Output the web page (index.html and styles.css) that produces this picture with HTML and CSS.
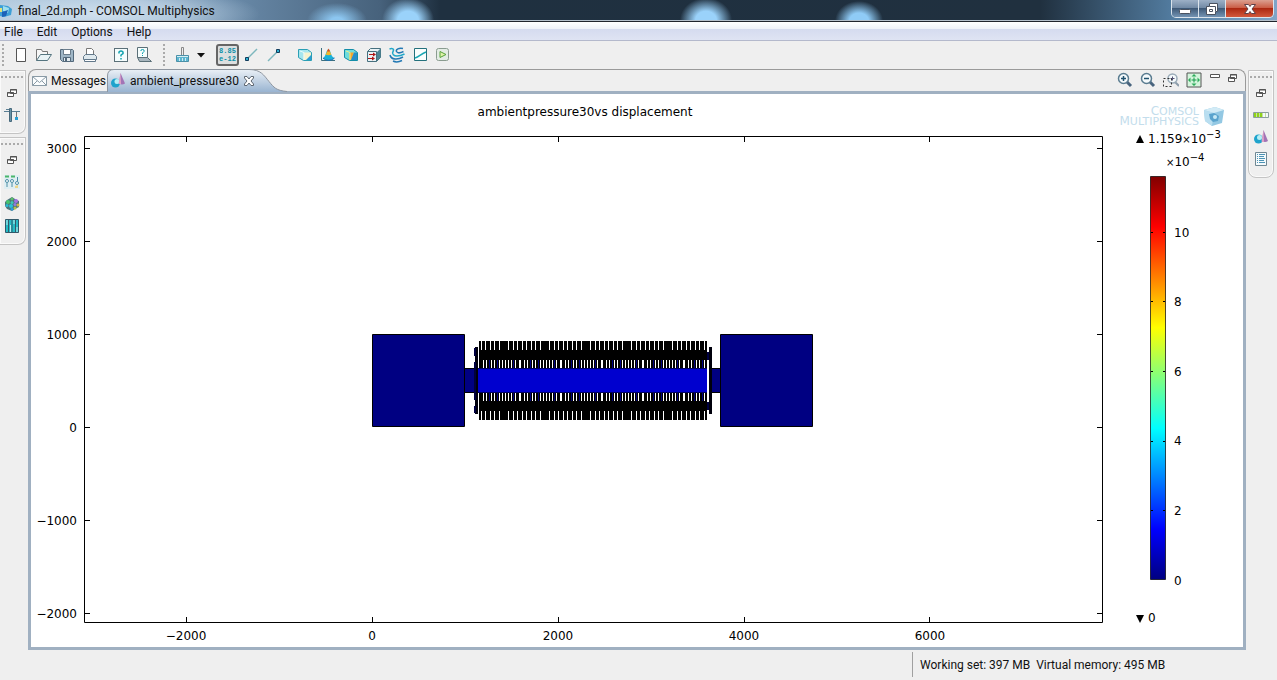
FILE: index.html
```
<!DOCTYPE html>
<html lang="en">
<head>
    <meta charset="UTF-8">
    <meta name="viewport" content="width=device-width, initial-scale=1.0">
    <title>final_2d.mph - COMSOL Multiphysics</title>
    <link rel="stylesheet" href="styles.css">
</head>
<body>
    <header class="titlebar">
        <svg class="app-icon" width="12" height="14" viewBox="0 0 12 14"><path d="M0 1l8 1 4 3-1 6-7 2-4-1z" fill="#3d9fd6"/><path d="M3 2l6 2-1 5-5-2z" fill="#9fe0ef"/><path d="M2 8l6-2-2 6-4 1z" fill="#1c62b8"/><path d="M0 4h2v4H0z" fill="#dfe37a"/></svg>
        <h1>final_2d.mph - COMSOL Multiphysics</h1>
        <div class="window-buttons">
            <button class="win-btn" aria-label="Minimize"><svg width="14" height="14" viewBox="0 0 14 14"><rect x="1.500" y="7.500" width="11" height="4" rx="1" fill="#fff" stroke="#4a5260"/></svg></button>
            <button class="win-btn" aria-label="Restore"><svg width="14" height="14" viewBox="0 0 14 14"><path d="M4.500 1.500h8v8h-2v3h-9v-8h3z" fill="#fff" stroke="#4a5260"/><path d="M4.500 7.500h3v2h-3zM5 4.500h5.500V9" fill="none" stroke="#4a5260"/></svg></button>
            <button class="win-btn win-close" aria-label="Close"><svg width="14" height="14" viewBox="0 0 14 14"><path d="M1.500 2.500h4L7 4.500l1.500-2h4L9 7l3.500 4.500h-4L7 9.500l-1.500 2h-4L5 7z" fill="#fff" stroke="#5f4048"/></svg></button>
        </div>
    </header>

    <nav class="menubar">
        <button>File</button>
        <button>Edit</button>
        <button>Options</button>
        <button>Help</button>
    </nav>

    <div class="toolbar">
        <span class="grip"></span>
        <button class="tool" aria-label="New"><svg width="16" height="16" viewBox="0 0 16 16"><path d="M3.500 1.500h9v13h-9z" fill="#fff" stroke="#555"/></svg></button>
        <button class="tool" aria-label="Open"><svg width="16" height="16" viewBox="0 0 16 16"><path d="M.5 13.500v-11h5l1 2h5v3" fill="#f7f7f7" stroke="#777"/><path d="M.5 13.500l4-6h11l-4 6z" fill="#e9f3f6" stroke="#557580"/></svg></button>
        <button class="tool" aria-label="Save"><svg width="16" height="16" viewBox="0 0 16 16"><path d="M1.500 2.500h12l1 1v11h-11l-2-2z" fill="#9fb6c6" stroke="#53697b"/><path d="M4.500 2.500h7v5h-7z" fill="#fff" stroke="#6b7d8b"/><path d="M4.500 10.500h7v4h-7z" fill="#e4ecf0" stroke="#53697b"/><path d="M6 11h2v3H6z" fill="#53697b"/></svg></button>
        <button class="tool" aria-label="Print"><svg width="16" height="16" viewBox="0 0 16 16"><path d="M4.500 8.500v-7h5l2 2v5" fill="#fff" stroke="#777"/><path d="M1.500 12.500v-3l2-2h9l2 2v3z" fill="#dfe9ee" stroke="#62788a"/><path d="M2.500 12.500h11v2h-11z" fill="#fff" stroke="#62788a"/></svg></button>
        <span class="gap"></span>
        <button class="tool" aria-label="Help"><svg width="16" height="16" viewBox="0 0 16 16"><rect x="1.500" y="1.500" width="13" height="13" fill="#f5fdfd" stroke="#5b7078"/><path d="M6 6.500V5q2-2 4 0v1.500L8 8v1.500M8 11v1.500" fill="none" stroke="#12a3b0" stroke-width="1.500"/></svg></button>
        <button class="tool" aria-label="Documentation"><svg width="16" height="16" viewBox="0 0 16 16"><path d="M1.500.5h10v10h-10z" fill="#f5fdfd" stroke="#5b7078"/><path d="M5 4V3q1.500-1 3 0v1.500L6.500 6v1M6.500 8v1" fill="none" stroke="#12a3b0"/><path d="M1.500 10.500h10l4 4h-12z" fill="#a9b7bf" stroke="#5b7078"/></svg></button>
        <span class="gap"></span>
        <span class="grip"></span>
        <button class="tool" aria-label="Clear"><svg width="16" height="16" viewBox="0 0 16 16"><path d="M7.500.5h2v8h-2z" fill="#eee" stroke="#888"/><path d="M2.500 8.500h12v6h-12z" fill="#5cb6d0" stroke="#4a90a8"/><path d="M3 9.500h11" stroke="#d9eff5"/><path d="M5.500 11v3M8.500 11v3M11.500 11v3" stroke="#cfeaf3"/></svg></button>
        <button class="tool tool-drop" aria-label="Clear options"><svg width="8" height="5" viewBox="0 0 8 5"><path d="M0 0h8L4 4.500z" fill="#111"/></svg></button>
        <span class="gap"></span>
        <button class="tool tool-on" aria-label="Scientific notation" aria-pressed="true"><span>8.85</span><span>e-12</span></button>
        <button class="tool" aria-label="First point"><svg width="16" height="16" viewBox="0 0 16 16"><path d="M4 12L14 2" stroke="#7db7bd" stroke-width="1.500"/><path d="M2.500 10.500h3v3h-3z" fill="#2ab0d0" stroke="#123c5c"/></svg></button>
        <button class="tool" aria-label="Second point"><svg width="16" height="16" viewBox="0 0 16 16"><path d="M2 14L12 4" stroke="#7db7bd" stroke-width="1.500"/><path d="M10.500 2.500h3v3h-3z" fill="#2ab0d0" stroke="#123c5c"/></svg></button>
        <span class="gap"></span>
        <button class="tool" aria-label="Surface"><svg width="16" height="16" viewBox="0 0 16 16"><path d="M1.500 2.500h9l4 3v8h-8l-5-3z" fill="#a5e6ee" stroke="#2b9fb5"/><path d="M6.500 5.500H14V13H6.500z" fill="#f6f3cf"/><path d="M9 13l5-5v5z" fill="#2d9bd6"/><path d="M3 4l4 1.500V13" fill="none" stroke="#e9fbfb"/></svg></button>
        <button class="tool" aria-label="Height"><svg width="16" height="16" viewBox="0 0 16 16"><path d="M1.500 1v12.500H15" fill="none" stroke="#3c6f80"/><path d="M3 11c3-1 3-8 5.500-9 2.500 1 2 8 6 9-3 3-9 3-11.500 0z" fill="#1bb1d8"/><path d="M5.500 7.500C7 6 7 3 8.500 2c1.500 1 1.500 4 3 5.500-2 1-4 1-6 0z" fill="#f0b82c"/><path d="M7 4.500L8.500 1.500 10 4.500z" fill="#d9482b"/><path d="M3 11c3 3 8 3 11.500 0" fill="none" stroke="#1572b8"/></svg></button>
        <button class="tool" aria-label="Volume"><svg width="16" height="16" viewBox="0 0 16 16"><path d="M1.500 2.500h9l4 3v8h-8l-5-3z" fill="#6fdcdc" stroke="#148ea8"/><path d="M6.500 5.500H11L8 13H6.500z" fill="#f5a42c"/><path d="M11 5.500h3V13H8z" fill="#278fcb"/><path d="M3 4l4 1.500V13" fill="none" stroke="#e9f18e"/></svg></button>
        <button class="tool" aria-label="Arrow volume"><svg width="16" height="16" viewBox="0 0 16 16"><path d="M1.500 4.500l3-3h10v9l-4 4h-9z" fill="#e9f3f6" stroke="#47707e"/><path d="M11 5l3.500-3.500v9L11 14z" fill="#4d8595"/><path d="M1.500 4.500h9v10" fill="none" stroke="#47707e"/><path d="M3 7.500h4M2 11.500h4" stroke="#b01515"/><path d="M7 5.500l3 2-3 2zM6 9.500l3 2-3 2z" fill="#b01515"/></svg></button>
        <button class="tool" aria-label="Streamline"><svg width="16" height="16" viewBox="0 0 16 16"><path d="M.5 2c3-1 5 0 3.500 2.500S5 9 8 9s5.500-1 7.500-2" fill="none" stroke="#21a8c8" stroke-width="1.500"/><path d="M14 1.500c-4-1-7.500 1-6.500 3s4 1.500 7 0M1 8c1 5 8 5 13 2M4 14c3 1.500 6 1 9-.5" fill="none" stroke="#2379b4" stroke-width="1.500"/></svg></button>
        <button class="tool" aria-label="Line"><svg width="16" height="16" viewBox="0 0 16 16"><path d="M2.500 1.500h12v12h-12z" fill="#fafefe" stroke="#24717c"/><path d="M3 11c4-1 6-4 11-6" fill="none" stroke="#1aa7b4" stroke-width="1.500"/></svg></button>
        <button class="tool" aria-label="Player"><svg width="16" height="16" viewBox="0 0 16 16"><rect x="1.500" y="1.500" width="12" height="12" rx="2" fill="#e3ece4" stroke="#8a9c90"/><path d="M5 4.500l6 3-6 3z" fill="#dff3a8" stroke="#55a23a"/></svg></button>
    </div>

    <main class="workbench">
        <aside class="side side-left">
            <div class="trim">
                <span class="trim-grip"></span>
                <button aria-label="Restore"><svg width="16" height="16" viewBox="0 0 16 16"><path d="M6.500 4.500h6v4h-6zM3.500 7.500h6v4h-6z" fill="#fff" stroke="#555"/><path d="M6 5h7M3 8h7" stroke="#555"/></svg></button>
                <button aria-label="Model builder"><svg width="16" height="16" viewBox="0 0 16 16"><path d="M0 4.500h16M2 2.500h6" stroke="#5b7f94"/><path d="M5.500 1.500h2v13h-2z" fill="#6a94a8" stroke="#47697c"/><path d="M12.500 5v5" stroke="#777"/><path d="M11 10h3v3h-3z" fill="#2a9fd2"/></svg></button>
            </div>
            <div class="trim">
                <span class="trim-grip"></span>
                <button aria-label="Restore"><svg width="16" height="16" viewBox="0 0 16 16"><path d="M6.500 4.500h6v4h-6zM3.500 7.500h6v4h-6z" fill="#fff" stroke="#555"/><path d="M6 5h7M3 8h7" stroke="#555"/></svg></button>
                <button aria-label="Settings"><svg width="16" height="16" viewBox="0 0 16 16"><path d="M0 1h16v14H0z" fill="#dfeef2"/><path d="M1 2.500h4M7 2.500h4" stroke="#4bb56b" stroke-width="2"/><circle cx="3" cy="7" r="1.500" fill="#fff" stroke="#4d8ea6"/><circle cx="8" cy="7" r="1.500" fill="#fff" stroke="#4d8ea6"/><circle cx="13" cy="9" r="1.500" fill="#fff" stroke="#4d8ea6"/><path d="M3 9v4M8 9v4M13.500 3v4" stroke="#4d8ea6"/><path d="M11 12l3-1v3h-3z" fill="#ecd68b"/></svg></button>
                <button aria-label="Mesh"><svg width="16" height="16" viewBox="0 0 16 16"><path d="M3 4l5-3 3 2 4 2v6l-4 2-3 2-5-2-2-3V6z" fill="#4d757c"/><circle cx="4" cy="6" r="2" fill="#45c46b"/><circle cx="8" cy="3" r="1.500" fill="#5cc06a"/><circle cx="8" cy="6.500" r="1.500" fill="#3bc9b8"/><circle cx="12" cy="5" r="2" fill="#a070e0"/><circle cx="3" cy="9.500" r="1.500" fill="#27bdd4"/><circle cx="7" cy="10" r="2" fill="#27c4d4"/><circle cx="11" cy="8.500" r="1.500" fill="#8f7be0"/><circle cx="14" cy="9" r="1.500" fill="#d0b848"/><circle cx="8" cy="13" r="1.500" fill="#2a9bdd"/><circle cx="11" cy="12" r="1.500" fill="#b5c04c"/></svg></button>
                <button aria-label="Materials"><svg width="16" height="16" viewBox="0 0 16 16"><path d="M1.500 1.500h13v13h-13z" fill="#25bcc6" stroke="#31596a"/><path d="M4.500 2v12M8 2v12M11.500 2v12" stroke="#31596a"/><path d="M3 2v5M6.500 7v7M10 2v4M13 9v5" stroke="#b8f0f0"/></svg></button>
            </div>
        </aside>

        <section class="editor">
            <div class="tabs">
                <button class="tab"><svg width="16" height="16" viewBox="0 0 16 16"><path d="M1.500 3.500h14v9h-14z" fill="#fbfdfe" stroke="#8a9ba6"/><path d="M1.500 3.500l7 6 7-6M1.500 12.500L6 8M15.500 12.500L11 8" fill="none" stroke="#8a9ba6"/></svg>Messages</button>
                <button class="tab tab-active">
                    <svg class="tab-shape" width="180" height="23" viewBox="0 0 180 23">
                        <defs><linearGradient id="tab-fill" x1="0" y1="0" x2="0" y2="1"><stop offset="0" stop-color="#eaf0f6"/><stop offset="1" stop-color="#99b4d1"/></linearGradient></defs>
                        <path d="M.5 23V7Q.5.5 7 .5h135c12 0 15 6 20 12s7 9 18 10v.500z" fill="url(#tab-fill)"/>
                        <path d="M.5 23V7Q.5.5 7 .5h135c12 0 15 6 20 12s7 9 18 10" fill="none" stroke="#8e96a0"/>
                    </svg>
                    <svg width="16" height="16" viewBox="0 0 16 16"><circle cx="5.500" cy="10" r="4.500" fill="#1ea3cc"/><circle cx="7" cy="8.500" r="2.500" fill="#b5eef4"/><path d="M10.500 0L15 10.500q-3 2-6 0z" fill="#a274b6"/><path d="M10.500 0L11 11q-1.500 0-2.500-.5z" fill="#e0a3c6"/></svg>ambient_pressure30
                    <svg width="12" height="12" viewBox="0 0 12 12"><path d="M1.500 1.500h2.500L6 4l2-2.500h2.500V3L8 6l2.500 3v1.500H8L6 8l-2 2.500H1.500V9L4 6 1.500 3z" fill="#fff" stroke="#5d6670"/></svg>
                </button>
                <div class="view-tools">
                    <button aria-label="Zoom in"><svg width="16" height="16" viewBox="0 0 16 16"><path d="M10 10l4 4" stroke="#47637d" stroke-width="3"/><circle cx="6.500" cy="6.500" r="5" fill="#f5fafc" stroke="#5a7c90" stroke-width="1.500"/><path d="M4 6.500h5M6.500 4v5" stroke="#21516e" stroke-width="1.500"/></svg></button>
                    <button aria-label="Zoom out"><svg width="16" height="16" viewBox="0 0 16 16"><path d="M10 10l4 4" stroke="#47637d" stroke-width="3"/><circle cx="6.500" cy="6.500" r="5" fill="#f5fafc" stroke="#5a7c90" stroke-width="1.500"/><path d="M4 6.500h5" stroke="#21516e" stroke-width="1.500"/></svg></button>
                    <button aria-label="Zoom box"><svg width="16" height="16" viewBox="0 0 16 16"><path d="M12 10l4 4" stroke="#8d9dab" stroke-width="2"/><circle cx="9.500" cy="6.500" r="4.500" fill="#f5fafc" stroke="#9aabb8" stroke-width="1.500"/><path d="M7.500 6.500h4M9.500 4.500v4" stroke="#557"/><path d="M.5 6.500h8v8h-8z" fill="none" stroke="#333" stroke-dasharray="2 2"/></svg></button>
                    <button aria-label="Zoom extents"><svg width="16" height="16" viewBox="0 0 16 16"><path d="M1 1h14v14H1z" fill="#d5f5dd" stroke="#555"/><path d="M5.500 8h5M8 5.500v5" stroke="#159a48"/><path d="M8 2l2.500 2.500h-5zM8 14l2.500-2.500h-5zM2 8l2.500-2.500v5zM14 8l-2.500-2.500v5z" fill="#2bab59"/></svg></button>
                    <button class="view-min" aria-label="Minimize view"><svg width="12" height="16" viewBox="0 0 12 16"><path d="M1.500 2.500h9v3h-9z" fill="#fff" stroke="#555"/></svg></button>
                    <button class="view-min" aria-label="Restore view"><svg width="12" height="16" viewBox="0 0 12 16"><path d="M4.500 2.500h6v4h-6zM2.500 5.500h6v4h-6z" fill="#fff" stroke="#555"/><path d="M4 3h7M2 6h7" stroke="#555"/></svg></button>
                </div>
            </div>

            <div class="plot">
                <svg class="chart" viewBox="0 0 1079 553">
                    <defs>
                        <pattern id="fingers-outer" x="477" width="41" height="553" patternUnits="userSpaceOnUse">
                            <path d="M0 0h1v553H0zM5 0h1v553H5zM9 0h1v553H9zM14 0h1v553h-1zM18 0h1v553h-1zM23 0h1v553h-1zM27 0h1v553h-1zM32 0h1v553h-1z" fill="#fff"/>
                        </pattern>
                        <pattern id="fingers-inner" x="488" width="41" height="553" patternUnits="userSpaceOnUse">
                            <path d="M0 0h2v553H0zM5 0h1v553H5zM8 0h1v553H8zM13 0h1v553h-1zM16 0h1v553h-1zM21 0h1v553h-1zM24 0h1v553h-1zM27 0h1v553h-1zM30 0h1v553h-1zM33 0h1v553h-1zM37 0h1v553h-1z" fill="#fff"/>
                            <path d="M11 0h1v553h-1zM19 0h1v553h-1zM35 0h1v553h-1z" fill="#000080"/>
                        </pattern>
                    </defs>

                    <text class="middle" x="554" y="22">ambientpressure30vs displacement</text>

                    <!-- axes box and ticks -->
                    <path class="axis" d="M53.500 42.500h1018v486h-1018z"/>
                    <path class="axis" d="M53 54.500h6M53 147.500h6M53 240.500h6M53 333.500h6M53 426.500h6M53 519.500h6"/>
                    <path class="axis" d="M1066 54.500h6M1066 147.500h6M1066 240.500h6M1066 333.500h6M1066 426.500h6M1066 519.500h6"/>
                    <path class="axis" d="M155.500 42v6M341.500 42v6M527.500 42v6M713.500 42v6M898.500 42v6"/>
                    <path class="axis" d="M155.500 529v-6M341.500 529v-6M527.500 529v-6M713.500 529v-6M898.500 529v-6"/>

                    <g class="end">
                        <text x="46" y="59">3000</text>
                        <text x="46" y="152">2000</text>
                        <text x="46" y="245">1000</text>
                        <text x="46" y="338">0</text>
                        <text x="46" y="431">−1000</text>
                        <text x="46" y="524">−2000</text>
                    </g>
                    <g class="middle">
                        <text x="155" y="546">−2000</text>
                        <text x="341" y="546">0</text>
                        <text x="527" y="546">2000</text>
                        <text x="713" y="546">4000</text>
                        <text x="899" y="546">6000</text>
                    </g>

                    <!-- anchors and beams -->
                    <path d="M341.500 240.500h92v92h-92zM689.500 240.500h92v92h-92z" fill="#000082" stroke="#000"/>
                    <path d="M433.500 274.500h12v24h-12zM678.500 274.500h11v24h-11z" fill="#000082" stroke="#000"/>

                    <!-- comb fingers -->
                    <path d="M448 247h228v79H448z" fill="#000"/>
                    <path d="M448 247h228v9H448zM448 317h228v9H448z" fill="url(#fingers-outer)"/>
                    <path d="M450 266h226v8H450zM450 299h226v8H450z" fill="url(#fingers-inner)"/>

                    <path d="M446 274h230v25H446z" fill="#0000cf"/>
                    <path d="M446 274.500h230M446 298.500h230" stroke="#000060"/>
                    <path d="M444 253h3v67h-3zM678 253h3v67h-3z" fill="#00000c"/>
                    <path d="M443 254h2v8h-2zM443 268h2v38h-2zM443 312h2v7h-2z" fill="#000040"/>
                    <path d="M676 258h2v8h-2zM676 308h2v8h-2z" fill="#000040"/>
                    <path d="M676 273h1v26h-1z" fill="#fff"/>
                </svg>

                <svg class="legend" viewBox="0 0 133 553">
                    <defs>
                        <linearGradient id="jet" x1="0" y1="1" x2="0" y2="0">
                            <stop offset="0" stop-color="#000080"/>
                            <stop offset=".125" stop-color="#0000ff"/>
                            <stop offset=".375" stop-color="#00ffff"/>
                            <stop offset=".625" stop-color="#ffff00"/>
                            <stop offset=".875" stop-color="#ff0000"/>
                            <stop offset="1" stop-color="#800000"/>
                        </linearGradient>
                    </defs>
                    <g class="brand">
                        <text x="89" y="21"><tspan class="cap">C</tspan>OMSOL</text>
                        <text x="89" y="31"><tspan class="cap">M</tspan>ULTIPHYSICS</text>
                    </g>
                    <path d="M94 16l11-3 9 3-2 13-10 3-7-5z" fill="#93c8e3"/>
                    <path d="M94 16l10 3-2 13-7-5z" fill="#b9def0"/>
                    <path d="M94 16l11-3 9 3-10 3z" fill="#d2ebf6"/>
                    <path d="M99 20l5-1 5 3-1 5-5 1-3-3z" fill="#5aa3cd"/>
                    <circle cx="105" cy="23" r="2" fill="#c7e9f5"/>

                    <path d="M26 49h8l-4-8z"/>
                    <text x="38" y="49">1.159<tspan class="times">×</tspan>10<tspan class="exp" dy="-5">−3</tspan></text>
                    <text x="56" y="72"><tspan class="times">×</tspan>10<tspan class="exp" dy="-5">−4</tspan></text>

                    <path d="M40.500 82.500h15v403h-15z" fill="url(#jet)" stroke="#000" stroke-opacity=".7"/>
                    <path class="axis" d="M41 138.500h2M41 207.500h2M41 277.500h2M41 347.500h2M41 416.500h2M53 138.500h2M53 207.500h2M53 277.500h2M53 347.500h2M53 416.500h2"/>
                    <text x="64" y="143">10</text>
                    <text x="64" y="212">8</text>
                    <text x="64" y="282">6</text>
                    <text x="64" y="351">4</text>
                    <text x="64" y="421">2</text>
                    <text x="64" y="491">0</text>

                    <path d="M26 521h8l-4 8z"/>
                    <text x="38" y="528">0</text>
                </svg>
            </div>
        </section>

        <aside class="side side-right">
            <div class="trim">
                <span class="trim-grip"></span>
                <button aria-label="Restore"><svg width="16" height="16" viewBox="0 0 16 16"><path d="M6.500 4.500h6v4h-6zM3.500 7.500h6v4h-6z" fill="#fff" stroke="#555"/><path d="M6 5h7M3 8h7" stroke="#555"/></svg></button>
                <button aria-label="Progress"><svg width="16" height="16" viewBox="0 0 16 16"><path d="M.5 5.500h15v5H.5z" fill="#f5fafa" stroke="#8b9e9e"/><path d="M1 6h8v4H1z" fill="#8fd218"/><path d="M3.500 6v4M6.500 6v4M9.500 6v4M12.500 6v4" stroke="#c4dfa0"/></svg></button>
                <button aria-label="Results"><svg width="16" height="16" viewBox="0 0 16 16"><circle cx="5.500" cy="10" r="4.500" fill="#1ea3cc"/><circle cx="6.500" cy="8.500" r="2.500" fill="#b5eef4"/><path d="M10.500 1L15 12q-3 2-6 0z" fill="#a274b6"/><path d="M10.500 1L11 13q-1.500 0-2.500-.5z" fill="#e0a3c6"/></svg></button>
                <button aria-label="Log"><svg width="16" height="16" viewBox="0 0 16 16"><path d="M2.500 1.500h11v13h-11z" fill="#f4fafc" stroke="#6e8793"/><path d="M4 3.500h1M4 5.500h1M4 7.500h1M4 9.500h1M4 11.500h1M6 3.500h6M6 5.500h5M6 7.500h6M6 9.500h5M6 11.500h6" stroke="#4c93b5"/></svg></button>
            </div>
        </aside>
    </main>

    <footer class="statusbar">
        <p>Working set: 397 MB&nbsp; Virtual memory: 495 MB</p>
    </footer>
</body>
</html>
```
FILE: styles.css
```
/* General Reset */
* {
    margin: 0;
    padding: 0;
    box-sizing: border-box;
}

body {
    display: flex;
    flex-direction: column;
    height: 100vh;
    overflow: hidden;
    background-color: #efefef;
    color: #111;
    font-family: Roboto, "Open Sans", sans-serif;
    font-size: 12px;
    line-height: 16px;
}

button {
    border: none;
    background: none;
    font: inherit;
    color: inherit;
}

svg {
    display: block;
    flex-shrink: 0;
}

/* Title bar */
.titlebar {
    display: flex;
    align-items: center;
    height: 22px;
    border-bottom: 1px solid #20242c;
    box-shadow: inset 0 -1px #b4bfca;
    background:
        radial-gradient(ellipse 160px 30px at 100px 14px, rgba(215, 230, 242, 0.9), rgba(200, 220, 236, 0.7) 50%, rgba(200, 220, 236, 0)),
        radial-gradient(ellipse 30px 18px at 337px 21px, #8cc6f0 20%, rgba(140, 198, 240, 0)),
        radial-gradient(ellipse 26px 22px at 408px 20px, #9ad2fa 40%, rgba(120, 180, 230, 0)),
        radial-gradient(ellipse 26px 22px at 706px 20px, #9ad2fa 40%, rgba(120, 180, 230, 0)),
        radial-gradient(ellipse 24px 20px at 859px 21px, #8fcbf6 40%, rgba(120, 180, 230, 0)),
        linear-gradient(to right, #a9c2d8, #6b8cab 220px, #47627c 380px, #1f3040 440px, #20303f 1040px, #5580a5 1180px, #7fa5c8);
}

.titlebar h1 {
    flex: 1;
    margin-left: 6px;
    font-size: 12px;
    font-weight: 400;
}

.window-buttons {
    display: flex;
    align-self: flex-start;
    height: 18px;
    margin-right: 3px;
    border: 1px solid #dbe4ec;
    border-top: none;
    border-radius: 0 0 5px 5px;
    overflow: hidden;
}

.win-btn {
    display: flex;
    align-items: center;
    justify-content: center;
    width: 27px;
    border-right: 1px solid #dbe4ec;
    background: linear-gradient(#9db0c6, #6d86a2 50%, #3f5a78 50%, #7393b3);
}

.win-close {
    width: 47px;
    border-right: none;
    background: linear-gradient(#dba090, #c9573f 50%, #ac2912 50%, #d2583c);
}

/* Menu */
.menubar {
    display: flex;
    height: 19px;
    padding: 2px 0 0 4px;
    gap: 14px;
    border-bottom: 1px solid #b4b9cc;
    background: linear-gradient(#fff, #eef1f8 7px, #d5dbef 7px, #dfe4f3);
}

/* Toolbar */
.toolbar {
    display: flex;
    align-items: center;
    height: 28px;
    padding-left: 2px;
}

.grip {
    width: 3px;
    height: 22px;
    margin-right: 4px;
    background: radial-gradient(circle at 1px 1px, #aaa 1px, transparent 1px) 0 0 / 3px 4px;
}

.gap {
    width: 8px;
}

.tool {
    display: flex;
    align-items: center;
    justify-content: center;
    width: 23px;
    height: 22px;
}

.tool-drop {
    width: 15px;
}

.tool-on {
    flex-direction: column;
    border: 2px solid #666;
    border-radius: 3px;
    background-color: #dcdfe0;
    color: #0b8fa8;
    font-family: "Liberation Mono", monospace;
    font-size: 7px;
    font-weight: 700;
    line-height: 8px;
    white-space: nowrap;
}

/* Workbench */
.workbench {
    display: flex;
    flex: 1;
    min-height: 0;
}

.side {
    display: flex;
    flex-direction: column;
    gap: 3px;
    padding-top: 1px;
}

.side-left {
    width: 28px;
    padding-right: 2px;
}

.side-right {
    width: 31px;
    padding: 1px 3px 0 2px;
}

.trim {
    display: flex;
    flex-direction: column;
    align-items: center;
    gap: 6px;
    padding: 5px 0 10px;
    border: 1px solid #c4c4c4;
    border-radius: 0 0 8px 8px;
    box-shadow: inset 0 0 0 1px #fafafa;
}

.side-left .trim {
    padding-right: 2px;
    border-left: none;
    border-radius: 0 0 8px 0;
}

.trim-grip {
    width: 22px;
    height: 3px;
    background: radial-gradient(circle at 1px 1px, #aaa 1px, transparent 1px) 0 0 / 4px 3px;
}

/* Editor area */
.editor {
    display: flex;
    flex: 1;
    flex-direction: column;
    min-width: 0;
}

.tabs {
    display: flex;
    height: 22px;
    border: 1px solid #9a9a9a;
    border-bottom: none;
    border-radius: 8px 8px 0 0;
}

.tab {
    display: flex;
    align-items: center;
    gap: 4px;
    padding: 0 1px 0 2px;
}

.tab-active {
    position: relative;
    z-index: 0;
    padding: 0 3px;
}

.tab-shape {
    position: absolute;
    top: -1px;
    left: 0;
    z-index: -1;
}

.view-tools {
    display: flex;
    align-items: center;
    gap: 7px;
    margin-left: auto;
    padding: 0 9px 2px 0;
}

.view-min {
    margin-right: -2px;
}

.plot {
    display: flex;
    flex: 1;
    min-height: 0;
    border: 3px solid #a0b0c1;
    background-color: #fff;
}

/* Chart */
.chart,
.legend {
    min-width: 0;
    height: 100%;
    font-family: "DejaVu Sans", sans-serif;
    font-size: 12px;
}

.chart {
    flex: 1079;
}

.legend {
    flex: 133;
}

.axis {
    fill: none;
    stroke: #000;
}

.middle {
    text-anchor: middle;
}

.end {
    text-anchor: end;
}

.times,
.exp {
    font-size: 10px;
}

.brand {
    fill: #c3ddec;
    font-size: 11px;
    text-anchor: end;
}

.cap {
    font-size: 12px;
}

/* Status bar */
.statusbar {
    display: flex;
    justify-content: flex-end;
    height: 30px;
    padding: 2px 0 3px;
}

.statusbar p {
    width: 365px;
    padding: 5px 7px;
    border-left: 1px solid #a0a0a0;
}
```
